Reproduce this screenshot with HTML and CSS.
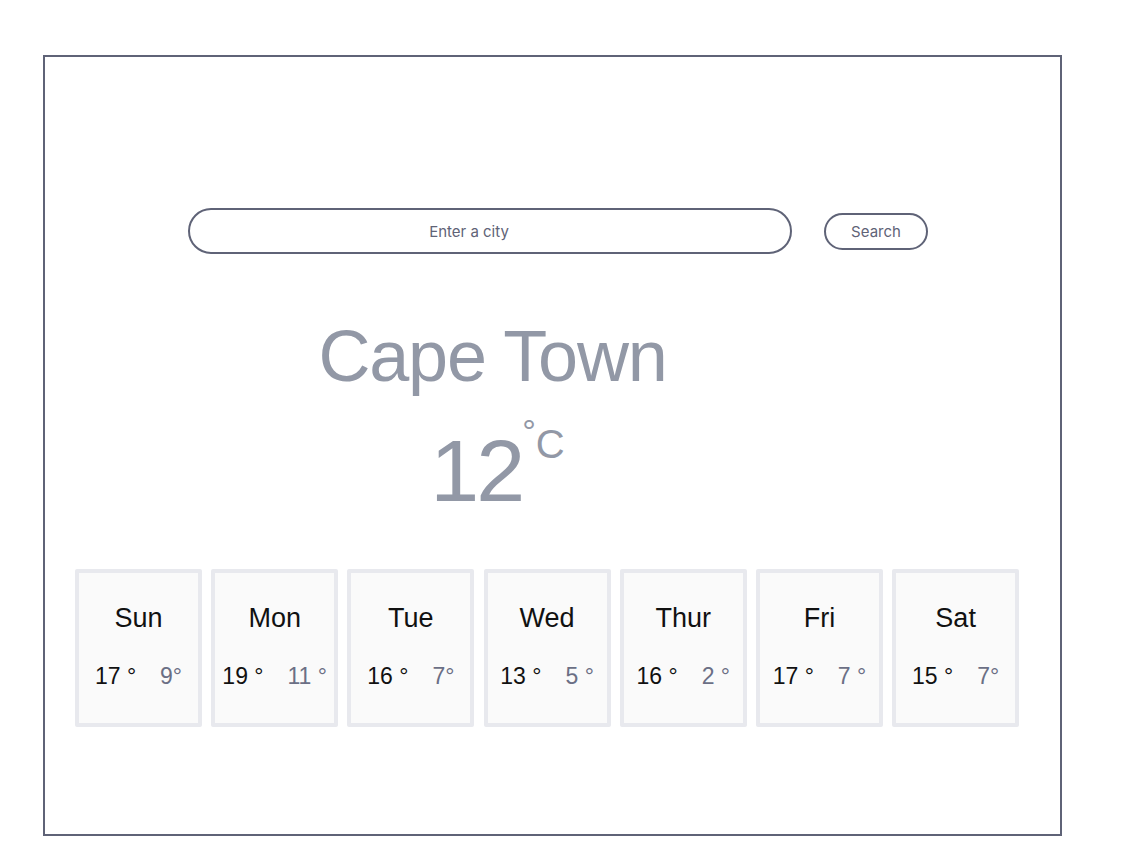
FILE: index.html
```html
<!DOCTYPE html>
<html>
<head>
<meta charset="utf-8">
<link rel="stylesheet" href="styles.css">
</head>
<body>
<div class="frame">
  <form class="search">
    <input class="city-input" type="text" placeholder="Enter a city">
    <button class="search-btn" type="button">Search</button>
  </form>
  <div class="current">
    <h1 class="city">Cape Town</h1>
    <div class="temp"><span class="temp-value">12</span><span class="deg">°</span><span class="unit">C</span></div>
  </div>
  <div class="forecast">
    <div class="day"><div class="day-name">Sun</div><div class="temps"><span class="max">17 °</span><span class="min">9°</span></div></div>
    <div class="day"><div class="day-name">Mon</div><div class="temps"><span class="max">19 °</span><span class="min">11 °</span></div></div>
    <div class="day"><div class="day-name">Tue</div><div class="temps"><span class="max">16 °</span><span class="min">7°</span></div></div>
    <div class="day"><div class="day-name">Wed</div><div class="temps"><span class="max">13 °</span><span class="min">5 °</span></div></div>
    <div class="day"><div class="day-name">Thur</div><div class="temps"><span class="max">16 °</span><span class="min">2 °</span></div></div>
    <div class="day"><div class="day-name">Fri</div><div class="temps"><span class="max">17 °</span><span class="min">7 °</span></div></div>
    <div class="day"><div class="day-name">Sat</div><div class="temps"><span class="max">15 °</span><span class="min">7°</span></div></div>
  </div>
</div>
</body>
</html>
```
FILE: styles.css
```css
* { box-sizing: border-box; }
html, body { margin: 0; padding: 0; background: #fff; }
body { font-family: "Liberation Sans", Arial, sans-serif; }

.frame {
  margin: 55px 0 0 43px;
  width: 1019px;
  height: 781px;
  border: 2px solid #5f6377;
  display: flex;
  flex-direction: column;
}

.search {
  display: flex;
  align-items: center;
  margin: 151px 0 0 143px;
  gap: 32px;
}
.city-input {
  width: 604px;
  height: 46px;
  border: 2px solid #5f6377;
  border-radius: 23px;
  text-align: center;
  padding: 0 42px 0 0;
  font-family: Inter, "Liberation Sans", sans-serif;
  font-size: 15px;
  color: #5f6377;
  background: #fff;
  outline: none;
}
.city-input::placeholder { color: #5f6377; }
.search-btn {
  width: 104px;
  height: 37px;
  border: 2px solid #5f6377;
  border-radius: 19px;
  background: #fff;
  font-family: Inter, "Liberation Sans", sans-serif;
  font-size: 15px;
  color: #5f6377;
  padding: 0;
}

.current {
  padding-right: 120px;
  text-align: center;
  color: #9298a6;
}
.city {
  margin: 62px 0 0;
  font-weight: 400;
  font-size: 72px;
  line-height: 80px;
  letter-spacing: -1.2px;
}
.temp {
  margin-top: 30px;
  line-height: 90px;
  display: flex;
  justify-content: center;
  padding-left: 10px;
}
.temp-value {
  font-size: 88px;
  letter-spacing: -3px;
}
.deg {
  font-size: 34px;
  line-height: 34px;
  margin-top: -12px;
  margin-left: 0;
}
.unit {
  font-size: 40px;
  line-height: 40px;
  margin-top: -2px;
  margin-left: 0;
}

.forecast {
  display: flex;
  margin: 53px 0 0 30px;
  gap: 9.2px;
}
.day {
  width: 127px;
  height: 158px;
  border: 4px solid #e8e9ee;
  border-radius: 2px;
  background: #fafafa;
  padding-top: 29px;
  text-align: center;
}
.day-name {
  font-size: 27px;
  line-height: 32px;
  color: #111;
}
.temps {
  margin-top: 29px;
  display: flex;
  justify-content: center;
  gap: 24px;
  font-size: 23px;
  line-height: 26px;
}
.max { color: #111; }
.min { color: #6b6f85; }
```
